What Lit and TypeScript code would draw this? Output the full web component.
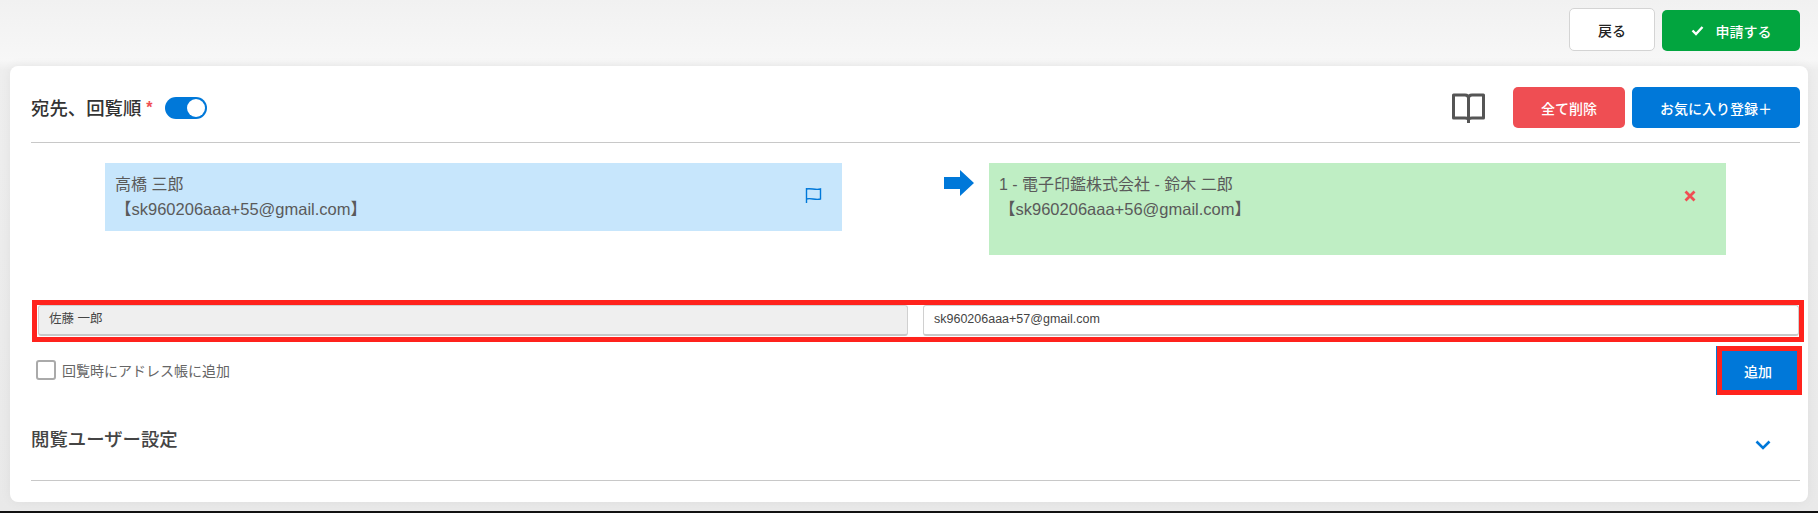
import { LitElement, html, css } from "lit";
import { customElement } from "lit/decorators.js";

@customElement("app-root")
export class AppRoot extends LitElement {
  static styles = css`
    :host {
      display: block;
      width: 1818px;
      height: 513px;
      overflow: hidden;
      box-sizing: border-box;
      font-family: "Liberation Sans", "Noto Sans CJK JP", sans-serif;
      color: #5a5a5a;
      background: linear-gradient(#f1f1f1 0, #f7f7f7 60px, #eeeeee 70px, #e9e9e9 100%);
      border-bottom: 2px solid #111;
    }
    * { box-sizing: border-box; }
    .top {
      height: 66px;
      display: flex;
      justify-content: flex-end;
      align-items: flex-start;
      gap: 7px;
      padding: 8px 18px 0 0;
    }
    .btn {
      border: none;
      border-radius: 5px;
      font: inherit;
      font-size: 14px;
      font-weight: 500;
      color: #fff;
      display: flex;
      align-items: center;
      justify-content: center;
      padding: 0;
    }
    .back {
      width: 86px;
      height: 43px;
      background: #fff;
      border: 1px solid #d4d4d4;
      color: #222;
    }
    .apply { width: 138px; height: 41px; margin-top: 2px; background: #02a53f; gap: 12px; }
    .card {
      margin: 0 10px;
      height: 436px;
      background: #fff;
      border-radius: 8px;
      padding: 0 8px 0 21px;
      box-shadow: 0 0 12px rgba(0, 0, 0, 0.05);
    }
    .head {
      height: 77px;
      border-bottom: 1px solid #c8c8c8;
      display: flex;
      align-items: center;
      padding-top: 7px;
    }
    .title {
      font-size: 18.4px;
      font-weight: 500;
      color: #333;
    }
    .head .title { padding-bottom: 2px; }
    .req { color: #ef4e53; font-size: 16px; margin-left: 5px; font-weight: 700; }
    .toggle {
      width: 42px;
      height: 22px;
      margin-left: 12px;
      border-radius: 11px;
      background: #0078d9;
      display: flex;
      justify-content: flex-end;
      align-items: center;
      padding-right: 2px;
    }
    .knob { width: 18px; height: 18px; border-radius: 50%; background: #fff; }
    .spacer { flex: 1; }
    .book { width: 33px; height: 30px; margin-right: 28px; display: block; }
    .del { width: 112px; height: 41px; background: #ef4e53; }
    .fav { width: 168px; height: 41px; background: #0078d9; margin-left: 7px; }
    .routes {
      display: flex;
      align-items: flex-start;
      height: 157px;
      padding: 20px 0 0 74px;
    }
    .box {
      width: 737px;
      padding: 10px;
      font-size: 16px;
      line-height: 24px;
      color: #5a5a5a;
      display: flex;
      justify-content: space-between;
    }
    .addr { font-size: 16.5px; }
    .blue { height: 68px; background: #c7e6fc; }
    .green { height: 92px; background: #bfeec4; }
    .arrow { width: 30px; height: 26px; margin: 7px 15px 0 102px; display: block; }
    .flag { width: 17px; height: 16px; margin: 14px 10px 0 0; display: block; }
    .x { width: 12px; height: 12px; margin: 17px 20px 0 0; display: block; }
    .hl { border: 5px solid #ff231d; }
    .inputs {
      margin: 0 -4px 0 1px;
      height: 42px;
      display: flex;
      gap: 15px;
      padding: 0 0 1px 1px;
    }
    .field {
      height: 31px;
      border: 1px solid #d0d0d0;
      border-bottom: 2px solid #c8c8c8;
      border-radius: 3px;
      font-size: 12.5px;
      line-height: 26px;
      padding: 0 10px;
      color: #444;
      background: #fff;
    }
    .name { width: 870px; background: #efefef; }
    .mail { flex: 1; }
    .row {
      display: flex;
      justify-content: space-between;
      align-items: flex-start;
      margin-top: 4px;
      height: 49px;
    }
    .check {
      display: flex;
      align-items: center;
      gap: 6px;
      font-size: 14px;
      color: #666;
      padding: 14px 0 0 5px;
    }
    .cb { width: 20px; height: 20px; border: 2px solid #aaa; border-radius: 3px; background: #fff; }
    .add {
      width: 85px;
      height: 49px;
      margin-right: -2px;
      padding-right: 3px;
      border-radius: 0;
      background: #0078d9;
      border: 5px solid #ff231d;
      box-shadow: -1px 0 0 #0078d9;
    }
    .foot {
      height: 86px;
      border-bottom: 1px solid #c8c8c8;
      display: flex;
      justify-content: space-between;
      padding: 33px 29px 0 0;
    }
    .foot .title { color: #444; line-height: 24px; }
    .chev { width: 16px; height: 10px; margin-top: 12px; display: block; }
  `;

  render() {
    return html`
      <div class="top">
        <button class="btn back">戻る</button>
        <button class="btn apply">
          <svg width="13" height="11" viewBox="0 0 13 11"><path d="M1.500 5.500 5 9l6.500-7" fill="none" stroke="#fff" stroke-width="2.400"/></svg>
          <span>申請する</span>
        </button>
      </div>
      <div class="card">
        <div class="head">
          <span class="title">宛先、回覧順</span><span class="req">*</span>
          <div class="toggle"><div class="knob"></div></div>
          <div class="spacer"></div>
          <svg class="book" viewBox="0 0 33 30" fill="none" stroke="#555" stroke-width="3">
            <path d="M1.500 2H13c2 0 3.500 1 3.500 3 0-2 1.500-3 3.500-3h11.500v23H20c-2 0-3.500.5-3.500 2 0-1.500-1.500-2-3.500-2H1.500z" stroke-linejoin="round"/>
            <path d="M16.500 5v25"/>
          </svg>
          <button class="btn del">全て削除</button>
          <button class="btn fav">お気に入り登録＋</button>
        </div>
        <div class="routes">
          <div class="box blue">
            <div>高橋 三郎<br /><span class="addr">【sk960206aaa+55@gmail.com】</span></div>
            <svg class="flag" viewBox="0 0 17 16" fill="none" stroke="#0078d9" stroke-width="1.400">
              <path d="M1.500 1v15M1.500 2c4-1.200 9 1.500 14 0v10c-5 1.500-10-1.500-14 0"/>
            </svg>
          </div>
          <svg class="arrow" viewBox="0 0 30 26"><path d="M0 7h16V0l14 13-14 13v-7H0z" fill="#0078d9"/></svg>
          <div class="box green">
            <div>1 - 電子印鑑株式会社 - 鈴木 二郎<br /><span class="addr">【sk960206aaa+56@gmail.com】</span></div>
            <svg class="x" viewBox="0 0 12 12"><path d="M1.500 1.500l9 9M10.500 1.500l-9 9" stroke="#ef4e53" stroke-width="2.800"/></svg>
          </div>
        </div>
        <div class="inputs hl">
          <div class="field name">佐藤 一郎</div>
          <div class="field mail">sk960206aaa+57@gmail.com</div>
        </div>
        <div class="row">
          <label class="check"><span class="cb"></span>回覧時にアドレス帳に追加</label>
          <button class="btn add">追加</button>
        </div>
        <div class="foot">
          <span class="title">閲覧ユーザー設定</span>
          <svg class="chev" viewBox="0 0 16 10"><path d="M1.500 1.500 8 8l6.500-6.500" fill="none" stroke="#0078d9" stroke-width="2.600"/></svg>
        </div>
      </div>
    `;
  }
}
